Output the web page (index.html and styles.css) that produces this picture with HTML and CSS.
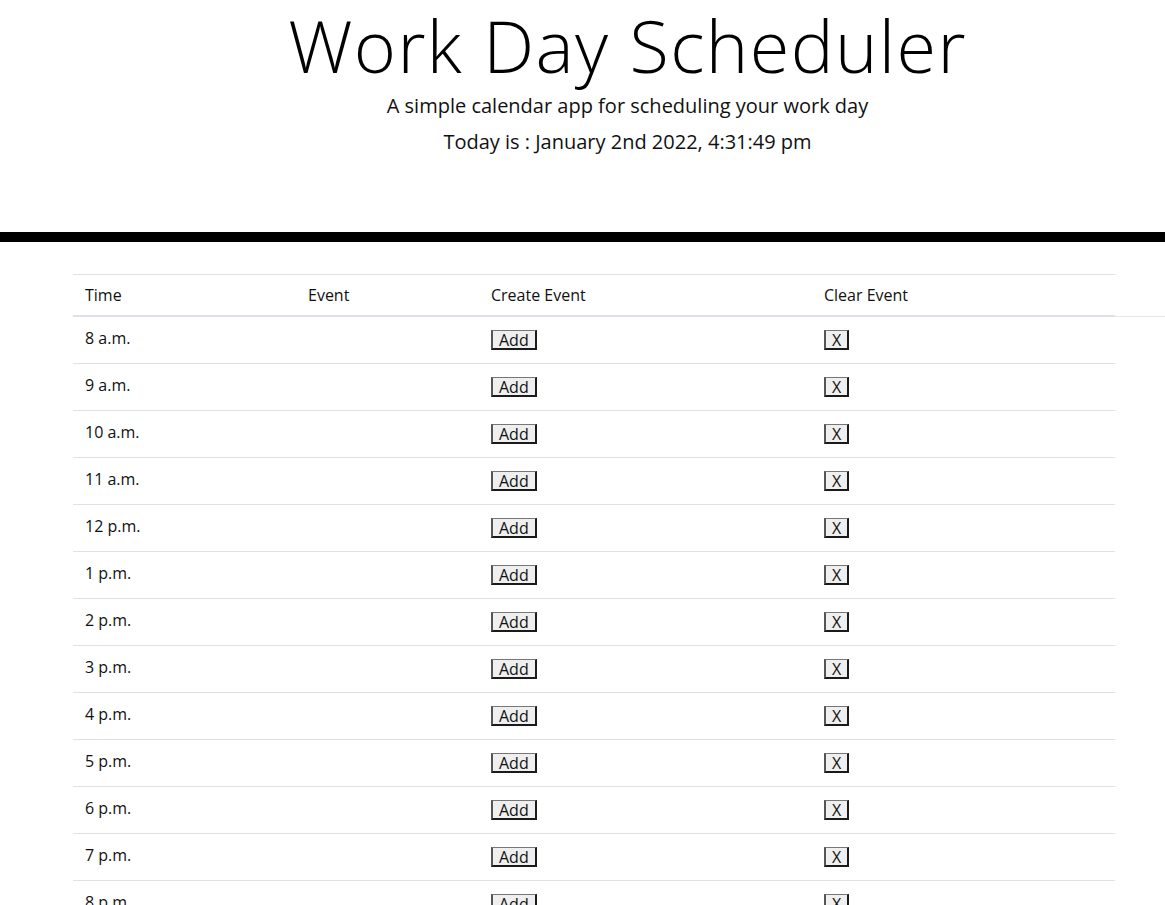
FILE: index.html
```html
<!DOCTYPE html>
<html lang="en">
<head>
<meta charset="utf-8">
<title>Work Day Scheduler</title>
<link rel="stylesheet" href="styles.css">
</head>
<body>
<header class="jumbotron">
  <h1 class="title">Work Day Scheduler</h1>
  <p class="lead">A simple calendar app for scheduling your work day</p>
  <p class="lead">Today is : January 2nd 2022, 4:31:49 pm</p>
</header>
<div class="bar"></div>
<main class="schedule">
  <table class="table">
    <colgroup>
      <col class="c-time"><col class="c-event"><col class="c-create"><col class="c-clear">
    </colgroup>
    <thead>
      <tr><th>Time</th><th>Event</th><th>Create Event</th><th>Clear Event</th></tr>
    </thead>
    <tbody>
      <tr><td>8 a.m.</td><td></td><td><button class="btn">Add</button></td><td><button class="btn">X</button></td></tr>
      <tr><td>9 a.m.</td><td></td><td><button class="btn">Add</button></td><td><button class="btn">X</button></td></tr>
      <tr><td>10 a.m.</td><td></td><td><button class="btn">Add</button></td><td><button class="btn">X</button></td></tr>
      <tr><td>11 a.m.</td><td></td><td><button class="btn">Add</button></td><td><button class="btn">X</button></td></tr>
      <tr><td>12 p.m.</td><td></td><td><button class="btn">Add</button></td><td><button class="btn">X</button></td></tr>
      <tr><td>1 p.m.</td><td></td><td><button class="btn">Add</button></td><td><button class="btn">X</button></td></tr>
      <tr><td>2 p.m.</td><td></td><td><button class="btn">Add</button></td><td><button class="btn">X</button></td></tr>
      <tr><td>3 p.m.</td><td></td><td><button class="btn">Add</button></td><td><button class="btn">X</button></td></tr>
      <tr><td>4 p.m.</td><td></td><td><button class="btn">Add</button></td><td><button class="btn">X</button></td></tr>
      <tr><td>5 p.m.</td><td></td><td><button class="btn">Add</button></td><td><button class="btn">X</button></td></tr>
      <tr><td>6 p.m.</td><td></td><td><button class="btn">Add</button></td><td><button class="btn">X</button></td></tr>
      <tr><td>7 p.m.</td><td></td><td><button class="btn">Add</button></td><td><button class="btn">X</button></td></tr>
      <tr><td>8 p.m.</td><td></td><td><button class="btn">Add</button></td><td><button class="btn">X</button></td></tr>
      <tr><td>9 p.m.</td><td></td><td><button class="btn">Add</button></td><td><button class="btn">X</button></td></tr>
    </tbody>
  </table>
</main>
</body>
</html>
```

FILE: styles.css
```css
html, body {
  margin: 0;
  padding: 0;
  background: #fff;
}

body {
  font-family: "Open Sans", "Liberation Sans", sans-serif;
  color: #111;
  font-size: 16px;
}

.jumbotron {
  padding: 9px 0 0 90px;
  text-align: center;
  height: 232px;
  box-sizing: border-box;
}

.title {
  margin: 0 0 7px;
  font-size: 72px;
  font-weight: 300;
  letter-spacing: 1.4px;
  line-height: 72px;
  color: #000;
}

.lead {
  margin: 0;
  font-size: 20px;
  font-weight: 400;
  line-height: 36px;
  color: #111;
}

.bar {
  height: 10px;
  background: #000;
}

.schedule {
  position: relative;
  padding: 32px 0 0 73px;
}

.schedule::after {
  content: "";
  position: absolute;
  left: 1115px;
  right: 0;
  top: 74px;
  height: 1px;
  background: #e3e6ea;
}

.table {
  width: 1042px;
  border-collapse: collapse;
  table-layout: fixed;
}

.c-time { width: 223px; }
.c-event { width: 183px; }
.c-create { width: 333px; }
.c-clear { width: 303px; }

.table th {
  text-align: left;
  font-weight: 400;
  padding: 9px 12px;
  line-height: 22px;
  border-top: 1px solid #dee2e6;
  border-bottom: 2px solid #dee2e6;
}

.table td {
  padding: 10px 12px 13px;
  line-height: 22px;
  vertical-align: top;
  border-bottom: 1px solid #dee2e6;
}

.btn {
  display: inline-block;
  vertical-align: top;
  margin-top: 3px;
  height: 20px;
  padding: 0 6px;
  font-family: "Open Sans", "Liberation Sans", sans-serif;
  font-size: 16px;
  line-height: 16px;
  color: #111;
  background: #efefef;
  border: 2px solid;
  border-color: #777 #1a1a1a #1a1a1a #555;
  border-width: 1px 2px 2px 2px;
  border-radius: 0;
}
```
